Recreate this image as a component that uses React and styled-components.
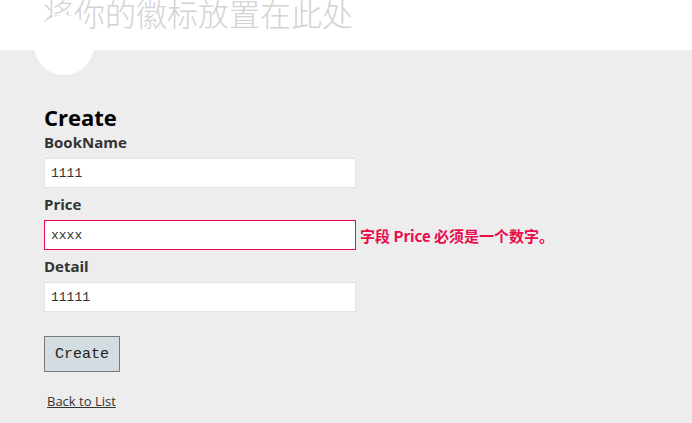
import styled, { createGlobalStyle } from "styled-components";

const GlobalStyle = createGlobalStyle`
  html, body {
    margin: 0;
    padding: 0;
    background: #ededed;
    font-family: "Open Sans", "Noto Sans CJK SC", sans-serif;
    color: #333;
  }
`;

const Header = styled.header`
  position: relative;
  height: 50px;
  background: #fff;
`;

const SiteTitle = styled.div`
  height: 50px;
  overflow: hidden;
  padding-left: 43px;
  font-family: "Noto Sans CJK SC", sans-serif;
  font-weight: 300;
  font-size: 31px;
  line-height: 31px;
  color: #d3d3d3;
  span {
    display: block;
    margin-top: -3px;
  }
`;

/* white disc hanging under the header */
const Badge = styled.div`
  position: absolute;
  left: 34px;
  top: 15px;
  width: 60px;
  height: 60px;
  border-radius: 50%;
  background: #fff;
`;

const Main = styled.main`
  padding: 53px 0 0 44px;
`;

const Title = styled.h2`
  margin: 0;
  font-size: 22px;
  font-weight: 700;
  line-height: 28px;
  color: #000;
`;

const Field = styled.div`
  display: flex;
  flex-direction: column;
  align-items: flex-start;
  margin-bottom: 2px;
`;

const Label = styled.label`
  font-size: 15px;
  font-weight: 700;
  line-height: 22px;
  margin-top: ${(p) => (p.$first ? "0" : "3px")};
  margin-bottom: 5px;
  color: #333;
`;

const Row = styled.div`
  display: flex;
  align-items: center;
`;

const Input = styled.input`
  box-sizing: border-box;
  width: 312px;
  height: 30px;
  padding: 0 6px;
  margin: 0;
  border: 1px solid ${(p) => (p.$invalid ? "#e80c4d" : "#e2e2e2")};
  background: #fff;
  font-family: "Liberation Mono", monospace;
  font-size: 13px;
  color: #333;
  outline: none;
`;

const Error = styled.span`
  margin-left: 4px;
  font-family: "Noto Sans CJK SC", sans-serif;
  font-size: 15px;
  font-weight: 700;
  color: #e80c4d;
`;

const Button = styled.button`
  box-sizing: border-box;
  width: 76px;
  height: 36px;
  margin-top: 22px;
  border: 1px solid #787878;
  background: #d3dce0;
  font-family: "Liberation Mono", monospace;
  font-size: 15px;
  color: #222;
  padding: 0;
`;

const BackLink = styled.a`
  display: inline-block;
  margin-top: 20px;
  padding-left: 3px;
  font-size: 13px;
  color: #333;
  text-decoration: underline;
`;

const fields = [
  { name: "BookName", value: "1111" },
  { name: "Price", value: "xxxx", error: "字段 Price 必须是一个数字。" },
  { name: "Detail", value: "11111" },
];

export default function App() {
  return (
    <>
      <GlobalStyle />
      <Header>
        <SiteTitle>
          <span>将你的徽标放置在此处</span>
        </SiteTitle>
        <Badge />
      </Header>
      <Main>
        <Title>Create</Title>
        <form onSubmit={(e) => e.preventDefault()}>
          {fields.map((f, i) => (
            <Field key={f.name}>
              <Label $first={i === 0}>{f.name}</Label>
              <Row>
                <Input defaultValue={f.value} $invalid={!!f.error} />
                {f.error && <Error>{f.error}</Error>}
              </Row>
            </Field>
          ))}
          <Button type="submit">Create</Button>
        </form>
        <BackLink href="#">Back to List</BackLink>
      </Main>
    </>
  );
}
